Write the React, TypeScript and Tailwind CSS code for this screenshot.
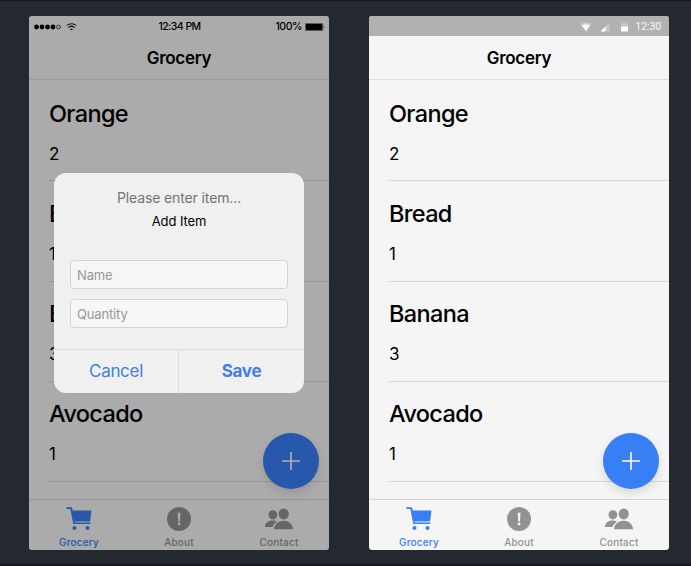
import type { ReactNode } from "react";

const items = [
  { name: "Orange", quantity: 2 },
  { name: "Bread", quantity: 1 },
  { name: "Banana", quantity: 3 },
  { name: "Avocado", quantity: 1 },
];

function CartIcon() {
  return (
    <svg className="h-6 w-[26px]" viewBox="0 0 26 24" fill="currentColor">
      <path d="M0.500 0.300h4.800c.5 0 .8.300.9.800l.5 2.300h18c.5 0 .8.300.7.800l-1.200 9.500c-.1.500-.3.800-.8.800H8.500l.2.900h15.600v1.500H7.300L4.300 2.100H.9C.3 2.100.1.900.5.300z" />
      <circle cx="8.500" cy="21" r="2" />
      <circle cx="21.500" cy="21" r="2" />
    </svg>
  );
}

function AlertIcon() {
  return (
    <svg className="size-6" viewBox="0 0 24 24">
      <circle cx="12" cy="12" r="12" fill="currentColor" />
      <path d="M10.700 5.700h2.800l-.5 8.700h-1.800z" fill="#f5f5f5" />
      <circle cx="12.100" cy="17" r="1.400" fill="#f5f5f5" />
    </svg>
  );
}

function PeopleIcon() {
  return (
    <svg className="h-[22px] w-7" viewBox="0 0 28 22" fill="currentColor">
      <ellipse cx="7.900" cy="6.800" rx="4.400" ry="4.600" />
      <ellipse cx="18.700" cy="5.900" rx="5.100" ry="5.500" />
      <path d="M0 18.800c.2-3.700 3.200-6.200 7.200-6.200 2 0 3.600.5 4.700 1.300-2.200 1.100-3.700 2.900-4.400 5.200H.4c-.2 0-.4-.1-.4-.3z" />
      <path d="M9.500 21.300c-.4 0-.6-.3-.5-.7.700-4.800 4.700-7.900 9.600-7.900s8.800 3.100 9.400 7.900c0 .4-.1.700-.5.700z" />
    </svg>
  );
}

function WifiIcon() {
  return (
    <svg className="h-2 w-[11px]" viewBox="0 0 11 8" fill="none" stroke="#000">
      <path d="M.7 2.700C3.300.200 7.700.200 10.300 2.700" strokeWidth="1" />
      <path d="M2.500 4.600c1.700-1.600 4.300-1.600 6 0" strokeWidth="1.200" />
      <path d="M4 6l1.500 1.600L7 6c-.9-.7-2.100-.7-3 0z" fill="#000" stroke="none" />
    </svg>
  );
}

function IosStatusBar() {
  return (
    <div className="grid h-5 shrink-0 grid-cols-3 items-center pt-px pr-1 pl-[5px] text-[10.500px] font-medium">
      <div className="flex items-center gap-[5px]">
        <svg className="h-[6px] w-[27px]" viewBox="0 0 27 6">
          <circle cx="2.500" cy="3" r="2.400" />
          <circle cx="8" cy="3" r="2.400" />
          <circle cx="13.500" cy="3" r="2.400" />
          <circle cx="19" cy="3" r="2.400" />
          <circle cx="24.500" cy="3" r="1.900" fill="none" stroke="#000" strokeWidth=".7" />
        </svg>
        <WifiIcon />
      </div>
      <span className="text-center whitespace-nowrap tracking-[-0.550px]">12:34 PM</span>
      <div className="flex items-center justify-end gap-[3px]">
        <span className="tracking-[-0.450px]">100%</span>
        <svg className="h-2 w-5" viewBox="0 0 20 8">
          <rect x=".3" y=".3" width="17.400" height="7.400" rx="1" fill="none" stroke="#000" strokeWidth=".6" />
          <rect x="1" y="1" width="16" height="6" rx=".4" />
          <path d="M18.500 2.700q1.500 1.300 0 2.600z" />
        </svg>
      </div>
    </div>
  );
}

function AndroidStatusBar() {
  return (
    <div className="flex h-5 shrink-0 items-center justify-end bg-[#b1b1b1] pt-px pr-2 text-white/90">
      <svg className="h-[10px] w-[48px]" viewBox="0 0 48 10" fill="#fff">
        <path d="M.5 2.200C3.500 0 8.500 0 11.500 2.200L6 9.500z" opacity=".35" />
        <path d="M2 3.500q4-2.200 8 0l-4 5.800z" />
        <path d="M20.500 9.500l9-9v9z" opacity=".3" />
        <path d="M20.500 9.500l5-5v5z" />
        <path d="M41 1.300h2V.3h3v1h2v8h-7z" opacity=".25" />
        <path d="M41 4.500h7v5h-7z" />
      </svg>
      <span className="ml-[7px] font-[Roboto,sans-serif] text-[10.500px] leading-5 tracking-[-0.100px]">12:30</span>
    </div>
  );
}

function Tab({ label, active, children }: { label: string; active?: boolean; children: ReactNode }) {
  return (
    <button className={`flex flex-1 flex-col items-center ${active ? "text-[#387ef5]" : "text-[#929292]"}`}>
      <span className="flex h-9 items-center justify-center pt-px">{children}</span>
      <span className="mt-px text-[10px] leading-[11px] font-medium tracking-[0.200px]">{label}</span>
    </button>
  );
}

function Phone({ statusBar, children }: { statusBar: ReactNode; children?: ReactNode }) {
  return (
    <section className="relative flex h-[533.500px] w-[300px] flex-col overflow-hidden rounded-[3px] bg-[#f5f5f5] text-black">
      {statusBar}
      <header className="flex h-11 shrink-0 items-center justify-center border-b border-[#dedede]">
        <h1 className="pt-[2px] text-[17px] font-semibold tracking-[-0.280px]">Grocery</h1>
      </header>
      <ul className="min-h-0 flex-1 overflow-hidden pt-px pl-5">
        {items.map((item) => (
          <li key={item.name} className="h-[100.300px] border-b border-[#d6d6da] pt-[18.600px]">
            <h2 className="text-[23.500px] leading-7 font-medium tracking-[-0.650px]">{item.name}</h2>
            <p className="mt-[16px] text-[17px] leading-5">{item.quantity}</p>
          </li>
        ))}
      </ul>
      <nav className="flex h-[50.500px] shrink-0 border-t border-[#d4d4d8]">
        <Tab label="Grocery" active><CartIcon /></Tab>
        <Tab label="About"><AlertIcon /></Tab>
        <Tab label="Contact"><PeopleIcon /></Tab>
      </nav>
      <button className="absolute right-[10px] bottom-[60.500px] flex size-14 items-center justify-center rounded-full bg-[#387ef5] shadow-[0_4px_10px_rgba(0,0,0,0.12)]">
        <svg className="size-[18px]" viewBox="0 0 18 18" stroke="#fff" strokeWidth="1.600">
          <path d="M0 9h18M9 0v18" />
        </svg>
      </button>
      {children}
    </section>
  );
}

function AddItemDialog() {
  return (
    <div className="absolute inset-0 flex items-start justify-center bg-black/30 pt-[157px]">
      <div className="flex h-[220px] w-[250px] flex-col overflow-hidden rounded-[12px] bg-[#f0f0f0]">
        <p className="mt-[17px] text-center text-[14px] leading-4 tracking-[-0.120px] text-[#747474]">Please enter item...</p>
        <h2 className="mt-[7px] text-center text-[13px] leading-4 tracking-[-0.100px]">Add Item</h2>
        <div className="mt-[31px] flex flex-col gap-[10px] px-4">
          <input className="h-[29px] rounded-[4px] border border-[#d3d3d3] bg-[#f6f6f6] px-[6px] text-[13px] tracking-[-0.150px] placeholder:text-[#999]" placeholder="Name" />
          <input className="h-[29px] rounded-[4px] border border-[#d3d3d3] bg-[#f6f6f6] px-[6px] text-[13px] tracking-[-0.150px] placeholder:text-[#999]" placeholder="Quantity" />
        </div>
        <div className="mt-auto flex h-11 border-t border-[#dadada] text-[17px] tracking-[-0.300px] text-[#4180e2]">
          <button className="w-[125px] border-r border-[#dadada]">Cancel</button>
          <button className="w-[125px] font-bold">Save</button>
        </div>
      </div>
    </div>
  );
}

export default function App() {
  return (
    <main className="flex h-[566px] w-[691px] gap-10 border-t border-b-2 border-[#141722] bg-[#23292e] pt-[15px] pl-[29px] font-[Inter,'Liberation_Sans',sans-serif]">
      <Phone statusBar={<IosStatusBar />}>
        <AddItemDialog />
      </Phone>
      <Phone statusBar={<AndroidStatusBar />} />
    </main>
  );
}
